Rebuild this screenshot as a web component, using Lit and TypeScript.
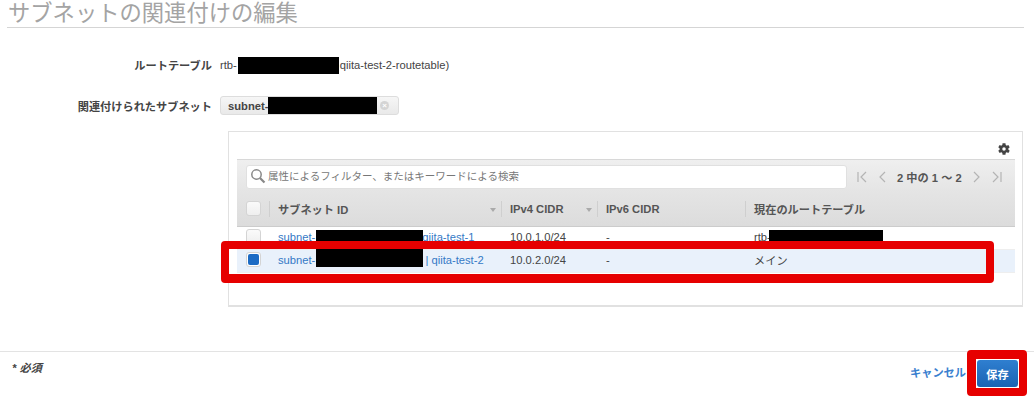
import { LitElement, html, css, svg } from "lit";
import { customElement } from "lit/decorators.js";

const pager = (d: string) => html`<svg class="pg" width="14" height="14" viewBox="0 0 14 14"><path d=${d} fill="none" stroke="#b4b4b4" stroke-width="1.2"/></svg>`;

@customElement("app-root")
export class AppRoot extends LitElement {
  static styles = css`
    :host { display: block; position: relative; width: 1034px; height: 400px; overflow: hidden; background: #fff;
      font-family: "Liberation Sans", "Noto Sans CJK JP", sans-serif; font-size: 11.2px; color: #444; }
    .title { margin: 0 10px 0 7px; height: 25px; padding: 2px 0 0 1px; border-bottom: 1px solid #d5d5d5; font-size: 22.3px; line-height: 24px; font-weight: 400; color: #a4a4a4; box-sizing: content-box; white-space: nowrap; }
    .form { display: flex; flex-direction: column; }
    .row { display: flex; align-items: center; gap: 8px; }
    .row.one { margin-top: 27px; height: 20px; }
    .row.two { margin-top: 21px; height: 20px; }
    .lab { width: 212px; text-align: right; font-weight: 700; color: #444; white-space: nowrap; }
    .gap { display: inline-block; width: 103px; }
    .gap.t { width: 107px; }
    .chip { width: 179px; height: 19px; margin-top: -1px; box-sizing: border-box; border: 1px solid #ddd; border-radius: 3px; background: linear-gradient(#f6f6f6, #e9e9e9); display: flex; align-items: center; justify-content: space-between; padding: 0 9px 0 7px; font-weight: 700; }
    .x { width: 9px; height: 9px; border-radius: 50%; background: #d4d4d4; color: #fff; font-size: 8px; line-height: 9px; text-align: center; font-weight: 700; }
    .panel { margin: 15px 11px 0 228px; height: 176px; box-sizing: border-box; border: 1px solid #e1e1e1; border-bottom-width: 2px; padding: 0 7px 0 8px; display: flex; flex-direction: column; }
    .gearbar { height: 27px; display: flex; justify-content: flex-end; align-items: flex-end; padding: 0 4px 3px 0; box-sizing: border-box; }
    .toolbar { height: 34px; box-sizing: border-box; border-top: 1px solid #d8d8d8; background: linear-gradient(#efefef, #e4e4e4); display: flex; align-items: center; padding: 0 0 0 9px; }
    .search { width: 601px; height: 24px; box-sizing: border-box; border: 1px solid #e0e0e0; border-radius: 3px; background: #fff; display: flex; align-items: center; gap: 2px; padding: 0 0 2px 3px; color: #777; font-size: 10.5px; white-space: nowrap; }
    .pager { margin-left: 8px; display: flex; align-items: center; gap: 6px; font-weight: 700; color: #555; }
    .pagetext { white-space: nowrap; padding: 0 2px; }
    .grid { display: grid; grid-template-columns: 32px 232px 96px 148px 270px; }
    .grid > div { display: flex; align-items: center; padding-left: 9px; box-sizing: border-box; white-space: nowrap; min-width: 0; overflow: hidden; }
    .head > div { height: 34px; padding-bottom: 2px; background: linear-gradient(#e4e4e4, #dcdcdc); border-bottom: 1px solid #ccc; font-weight: 700; color: #555; position: relative; }
    .head > div:not(.cb)::before { content: ""; position: absolute; left: 0; top: 8px; height: 16px; width: 1px; background: #cfcfcf; }
    .caret { position: absolute; right: 5px; top: 15px; border: 3.5px solid transparent; border-top: 4px solid #aaa; border-bottom: 0; }
    .body > div { height: 23px; padding-bottom: 3px; color: #444; border-bottom: 1px solid #eee; }
    .body.sel > div { background: #e9f1fb; }
    .body > div.link { color: #3579c6; }
    .box { width: 15px; height: 15px; box-sizing: border-box; border: 1px solid #d4d4d4; border-radius: 3px; background: linear-gradient(#fafafa, #efefef); }
    .box.on { background: #fff; display: flex; align-items: center; justify-content: center; }
    .box.on i { display: block; width: 11px; height: 11px; border-radius: 2px; background: #1c6bc4; }
    .foot { position: absolute; left: 0; right: 0; top: 351px; height: 49px; border-top: 1px solid #e3e3e3; box-sizing: border-box; display: flex; justify-content: space-between; padding: 9px 16px 0 12px; }
    .req { font-weight: 700; font-style: italic; color: #444; margin-top: -2px; }
    .acts { display: flex; align-items: flex-start; gap: 11px; }
    .cancel { color: #3a80cf; font-weight: 700; margin-top: 3px; white-space: nowrap; }
    .save { width: 41px; height: 27px; border-radius: 3px; margin-top: -1px; background: linear-gradient(#2f7fd0, #1a63b3); color: #fff; font-weight: 700; display: flex; align-items: center; justify-content: center; }
    .black { position: absolute; background: #000; }
    .red { position: absolute; box-sizing: border-box; border: solid #e60000; border-radius: 4px; }
    .r1 { left: 238px; top: 57px; width: 101px; height: 17px; }
    .r2 { left: 268px; top: 97px; width: 109px; height: 17px; }
    .r3 { left: 316px; top: 230px; width: 107px; height: 37px; }
    .r4 { left: 769px; top: 230px; width: 114px; height: 14px; }
    .f1 { left: 221px; top: 241px; width: 773px; height: 42px; border-width: 8px 8px 9px 8px; }
    .f2 { left: 967px; top: 350px; width: 60px; height: 46px; border-width: 9px 8px 8px 9px; }
  `;

  render() {
    return html`
      <div class="title">サブネットの関連付けの編集</div>
      <div class="form">
        <div class="row one"><div class="lab">ルートテーブル</div><div>rtb-<span class="gap"></span>qiita-test-2-routetable)</div></div>
        <div class="row two"><div class="lab">関連付けられたサブネット</div><div class="chip"><span>subnet-</span><span class="x">×</span></div></div>
      </div>
      <div class="panel">
        <div class="gearbar">
          <svg width="14" height="14" viewBox="0 0 24 24"><path fill="#444" fill-rule="evenodd" d="M19.4 13a7.6 7.6 0 0 0 0-2l2.4-1.9-2.3-4-2.9 1.2a7.5 7.5 0 0 0-1.7-1L14.5 2h-5l-.4 3.3a7.5 7.500 0 0 0-1.700 1L4.500 5.100l-2.300 4L4.600 11a7.600 7.600 0 0 0 0 2l-2.400 1.900 2.300 4 2.900-1.200a7.500 7.500 0 0 0 1.700 1l.4 3.300h5l.4-3.300a7.500 7.500 0 0 0 1.700-1l2.900 1.200 2.300-4zM12 15a3 3 0 1 1 0-6 3 3 0 0 1 0 6z"/></svg>
        </div>
        <div class="toolbar">
          <div class="search">
            <svg width="16" height="16" viewBox="0 0 16 16">${svg`<circle cx="6.500" cy="6.500" r="4.700" fill="none" stroke="#888" stroke-width="1.500"/><path d="M10 10l4.500 4.500" stroke="#888" stroke-width="2.200"/>`}</svg>
            属性によるフィルター、またはキーワードによる検索
          </div>
          <div class="pager">
            ${pager("M3 2v10M11 2L6 7l5 5")}${pager("M10 2L5 7l5 5")}
            <span class="pagetext">2 中の 1 ～ 2</span>
            ${pager("M4 2l5 5-5 5")}${pager("M3 2l5 5-5 5M11 2v10")}
          </div>
        </div>
        <div class="grid head">
          <div class="cb"><div class="box"></div></div>
          <div>サブネット ID<span class="caret"></span></div>
          <div>IPv4 CIDR<span class="caret"></span></div>
          <div>IPv6 CIDR</div>
          <div>現在のルートテーブル</div>
        </div>
        <div class="grid body">
          <div class="cb"><div class="box"></div></div>
          <div class="link">subnet-<span class="gap t"></span>qiita-test-1</div>
          <div>10.0.1.0/24</div><div>-</div><div>rtb-</div>
        </div>
        <div class="grid body sel">
          <div class="cb"><div class="box on"><i></i></div></div>
          <div class="link">subnet-<span class="gap t"></span>&nbsp;| qiita-test-2</div>
          <div>10.0.2.0/24</div><div>-</div><div>メイン</div>
        </div>
      </div>
      <div class="foot">
        <div class="req">* 必須</div>
        <div class="acts"><span class="cancel">キャンセル</span><div class="save">保存</div></div>
      </div>
      <div class="black r1"></div><div class="black r2"></div><div class="black r3"></div><div class="black r4"></div>
      <div class="red f1"></div><div class="red f2"></div>
    `;
  }
}
